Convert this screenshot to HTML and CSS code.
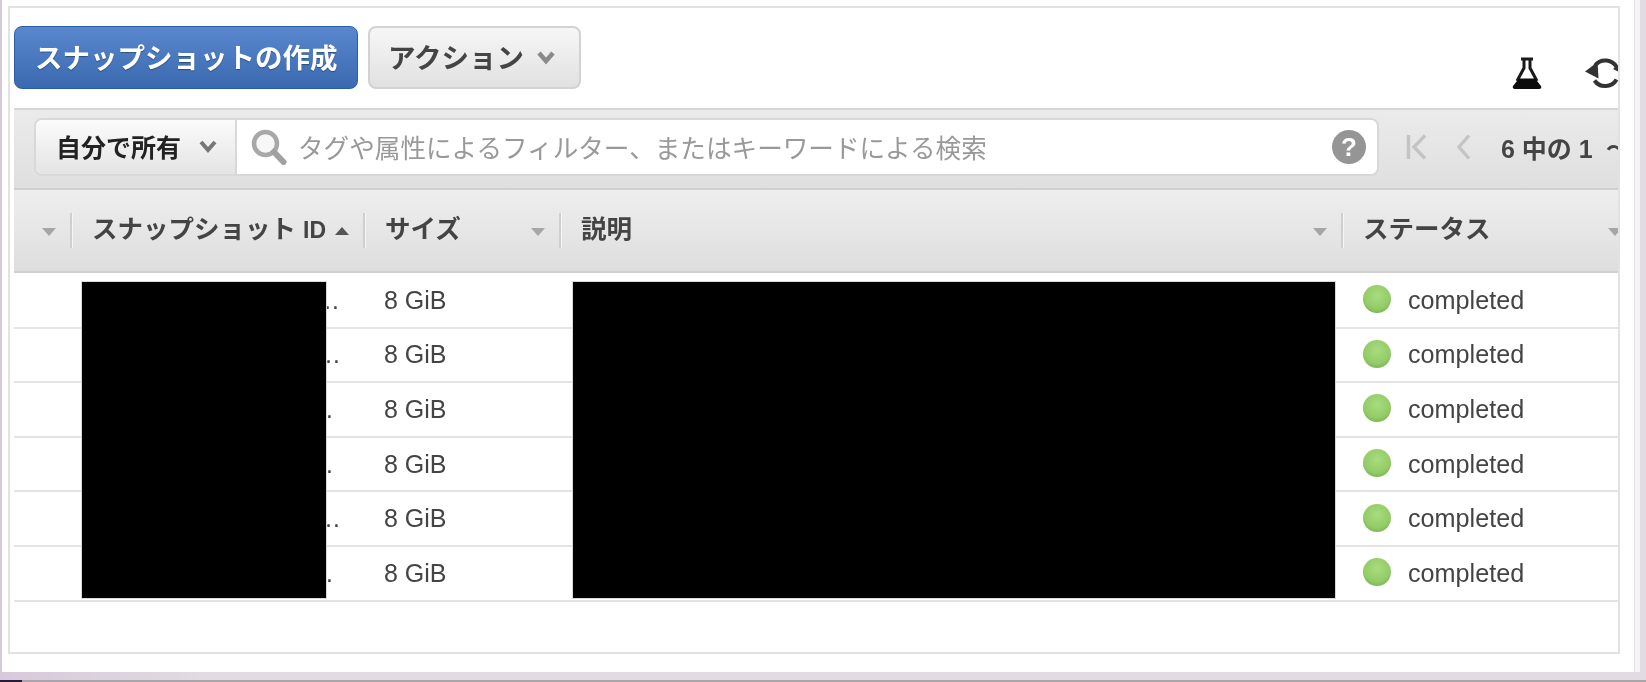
FILE: index.html
```html
<!DOCTYPE html>
<html lang="ja">
<head>
<meta charset="utf-8">
<title>スナップショット</title>
<link rel="stylesheet" href="styles.css">
</head>
<body>
<div class="window">
  <main class="panel">
    <div class="actions">
      <button class="btn btn-primary"><span class="btn-label">スナップショットの作成</span></button>
      <button class="btn btn-default"><span class="btn-label">アクション</span>
        <svg class="chev chev-action" viewBox="0 0 18 14"><path d="M2 2l7 8 7-8" fill="none" stroke="#8a8a8a" stroke-width="4.5"/></svg>
      </button>
      <div class="tools">
        <svg class="flask" viewBox="0 0 30 32"><path d="M9 2h12M12 2v9L5 24M18 2v9l7 13" fill="none" stroke="#1a1a1a" stroke-width="3"/><path d="M7 21.500h16L29 29c.8 2-.2 3-2.500 3h-23C1.200 32 .2 31 1 29z" fill="#0c0c0c"/></svg>
        <svg class="refresh" viewBox="0 0 36 32"><path d="M10 8.500A13 13 0 0 1 32 11M9.500 23.500A13 13 0 0 0 31.500 22.500" fill="none" stroke="#333" stroke-width="4"/><path d="M0 14.500L12.500 5l1 16.500z" fill="#333"/><path d="M28 12l8-6v10z" fill="#333"/></svg>
      </div>
    </div>

    <div class="toolbar">
      <div class="filter">
        <div class="owner"><span class="owner-label">自分で所有</span>
          <svg class="chev chev-owner" viewBox="0 0 18 14"><path d="M2 2l7 8 7-8" fill="none" stroke="#777" stroke-width="4"/></svg>
        </div>
        <div class="search">
          <svg class="lens" viewBox="0 0 36 36"><circle cx="14.500" cy="14.500" r="11.500" fill="#f7f7f7" stroke="#a8a8a8" stroke-width="4.500"/><path d="M23 23l9.500 10" stroke="#a0a0a0" stroke-width="6" stroke-linecap="round"/></svg>
          <span class="placeholder">タグや属性によるフィルター、またはキーワードによる検索</span>
          <span class="help">?</span>
        </div>
      </div>
      <svg class="pg-first" viewBox="0 0 22 26"><path d="M2.500 1v24M19 1.500L8 13l11 11.500" fill="none" stroke="#c4c4c4" stroke-width="3.400"/></svg>
      <svg class="pg-prev" viewBox="0 0 15 26"><path d="M13 1.500L3 13l10 11.500" fill="none" stroke="#c4c4c4" stroke-width="3.400"/></svg>
      <span class="pg-text">6 中の 1 <span class="pg-sep">～</span> 6</span>
    </div>

    <div class="table-head">
      <div class="th th-check"><i class="caret"></i></div>
      <div class="th"><span class="th-cell"><b>スナップショット <span class="th-id">ID</span></b><i class="caret-up"></i></span></div>
      <div class="th"><span class="th-cell"><b>サイズ</b><i class="caret"></i></span></div>
      <div class="th"><span class="th-cell"><b>説明</b><i class="caret"></i></span></div>
      <div class="th"><span class="th-cell"><b>ステータス</b><i class="caret"></i></span></div>
    </div>

    <div class="table-body">
      <div class="row"><div></div><div class="id id-a">…</div><div class="size">8 GiB</div><div></div><div class="status"><i class="dot"></i>completed</div></div>
      <div class="row"><div></div><div class="id id-b">…</div><div class="size">8 GiB</div><div></div><div class="status"><i class="dot"></i>completed</div></div>
      <div class="row"><div></div><div class="id id-c">…</div><div class="size">8 GiB</div><div></div><div class="status"><i class="dot"></i>completed</div></div>
      <div class="row"><div></div><div class="id id-c">…</div><div class="size">8 GiB</div><div></div><div class="status"><i class="dot"></i>completed</div></div>
      <div class="row"><div></div><div class="id id-b">…</div><div class="size">8 GiB</div><div></div><div class="status"><i class="dot"></i>completed</div></div>
      <div class="row"><div></div><div class="id id-c">…</div><div class="size">8 GiB</div><div></div><div class="status"><i class="dot"></i>completed</div></div>
      <div class="redact redact-id"></div>
      <div class="redact redact-desc"></div>
    </div>
  </main>
</div>
<div class="taskbar"><span class="taskbar-corner"></span></div>
</body>
</html>
```
FILE: styles.css
```css
* { box-sizing: border-box; }

html, body {
  margin: 0;
  height: 682px;
  overflow: hidden;
}

body {
  display: flex;
  flex-direction: column;
  background: linear-gradient(90deg, #d8c8dc, #e2dce2 220px);
  font-family: "Liberation Sans", "Noto Sans CJK JP", sans-serif;
  color: #444;
}

.window {
  flex: 0 0 672px;
  width: 1634px;
  padding: 6px 14px 18px 6px;
  background: #fff;
  border-left: 2px solid #d6c9da;
  display: flex;
  box-shadow: 1px 0 0 #e6e1e6, 6px 0 0 #f5f3f5;
  filter: blur(.4px);
}

.taskbar {
  margin-top: 8px;
  height: 2px;
  background: #a9a6a9;
}

.taskbar-corner {
  display: block;
  width: 22px;
  height: 2px;
  background: #2a1a38;
}

.panel {
  flex: 1;
  border: 2px solid #e2e2e2;
  padding-left: 4px;
  overflow: hidden;
  background: #fff;
}

/* Action row */
.actions {
  height: 100px;
  padding-top: 18px;
  display: flex;
  align-items: flex-start;
  gap: 10px;
}

.btn {
  height: 63px;
  border-radius: 8px;
  font: bold 27.500px "Liberation Sans", "Noto Sans CJK JP", sans-serif;
  white-space: nowrap;
  display: flex;
  align-items: center;
}

.btn-label { padding-bottom: 3px; }

.btn-primary {
  width: 344px;
  padding: 0 0 0 20px;
  color: #fff;
  background: linear-gradient(#5a88cf, #3a69b0);
  border: 1px solid #2a5fa8;
  text-shadow: 0 1px 1px rgba(0, 0, 0, .35);
}

.btn-default {
  width: 213px;
  padding: 0 0 0 18px;
  color: #444;
  background: linear-gradient(#f6f6f6, #e1e1e1);
  border: 2px solid #d2d2d2;
}

.chev { display: block; }
.chev-action { width: 18px; height: 14px; margin-left: 13px; }
.chev-owner { width: 18px; height: 14px; margin-left: 18px; }

.tools {
  margin-left: auto;
  align-self: flex-end;
  display: flex;
  align-items: flex-end;
  padding-bottom: 19px;
}

.flask { width: 30px; height: 32px; display: block; }
.refresh { width: 36px; height: 32px; display: block; margin-left: 43px; margin-right: -3px; flex: none; }

/* Filter toolbar */
.toolbar {
  width: 1604px;
  height: 82px;
  padding: 0 0 4px 20px;
  display: flex;
  align-items: center;
  white-space: nowrap;
  background: linear-gradient(#ebebeb, #dfdfdf);
  border-top: 2px solid #d6d6d6;
  border-bottom: 2px solid #cfcfcf;
}

.filter {
  flex: 0 0 1345px;
  height: 58px;
  display: flex;
  background: #fff;
  border: 2px solid #d8d8d8;
  border-radius: 8px;
  overflow: hidden;
}

.owner {
  flex: 0 0 201px;
  padding-left: 20px;
  display: flex;
  align-items: center;
  font-size: 25px;
  font-weight: bold;
  color: #222;
  background: linear-gradient(#fbfbfb, #e4e4e4);
  border-right: 2px solid #d8d8d8;
}

.owner-label { padding-bottom: 2px; }

.search {
  flex: 1;
  display: flex;
  align-items: center;
  padding-left: 14px;
}

.lens { width: 36px; height: 36px; display: block; }

.placeholder {
  margin-left: 11px;
  padding-bottom: 2px;
  font-size: 25.600px;
  color: #999;
}

.help {
  margin-left: auto;
  margin-right: 11px;
  width: 34px;
  height: 34px;
  border-radius: 50%;
  background: #959595;
  color: #fff;
  font-size: 26px;
  font-weight: bold;
  line-height: 34px;
  text-align: center;
}

.pg-first { width: 22px; height: 26px; margin-left: 27px; flex: none; }
.pg-prev { width: 15px; height: 26px; margin-left: 28px; flex: none; }

.pg-text {
  margin-left: 30px;
  font-size: 25px;
  font-weight: bold;
  color: #444;
}

.pg-sep { margin-left: 6px; }

/* Table */
.table-head,
.row {
  width: 1622px;
  display: grid;
  grid-template-columns: 56px 293px 196px 782px 295px;
}

.table-head {
  height: 83px;
  align-items: center;
  background: linear-gradient(#eeeeee, #dedede);
  border-bottom: 2px solid #d0d0d0;
}

.th { height: 35px; display: flex; align-items: center; }
.th-check { justify-content: flex-end; padding-right: 14px; }

.th-cell {
  flex: 1;
  height: 35px;
  display: flex;
  align-items: center;
  padding-left: 20px;
  padding-right: 14px;
  border-left: 2px solid #cfcfcf;
  box-shadow: inset 1px 0 0 #f5f5f5;
}

.th-cell b {
  margin-bottom: 8px;
  font-size: 25.500px;
  color: #444;
  white-space: nowrap;
}

.th-id { font-size: 23px; }

.caret,
.caret-up {
  display: block;
  width: 0;
  height: 0;
  border-left: 7px solid transparent;
  border-right: 7px solid transparent;
}

.caret { border-top: 8px solid #a6a6a6; margin-left: auto; margin-top: 2px; }
.caret-up { border-bottom: 8px solid #555; margin-left: 9px; }

.table-body { position: relative; margin-top: 1px; }

.row {
  height: 54.600px;
  align-items: center;
  border-bottom: 2px solid #e4e4e4;
  font-size: 25px;
  color: #444;
}

.id-a { padding-left: 245px; }
.id-b { padding-left: 246px; }
.id-c { padding-left: 239px; }

.size { padding-left: 21px; }

.status {
  display: flex;
  align-items: center;
  padding-left: 22px;
  font-size: 25.200px;
}

.dot {
  flex: none;
  width: 28px;
  height: 28px;
  margin-right: 17px;
  margin-bottom: 2px;
  border-radius: 50%;
  background: radial-gradient(circle at 50% 38%, #a9dc7e 0, #93cc67 58%, #669f42 100%);
}

.redact {
  position: absolute;
  top: 8px;
  height: 316px;
  background: #000;
  box-shadow: 0 0 0 1px #d8d8d8;
}

.redact-id { left: 68px; width: 244px; }
.redact-desc { left: 559px; width: 762px; }
```
